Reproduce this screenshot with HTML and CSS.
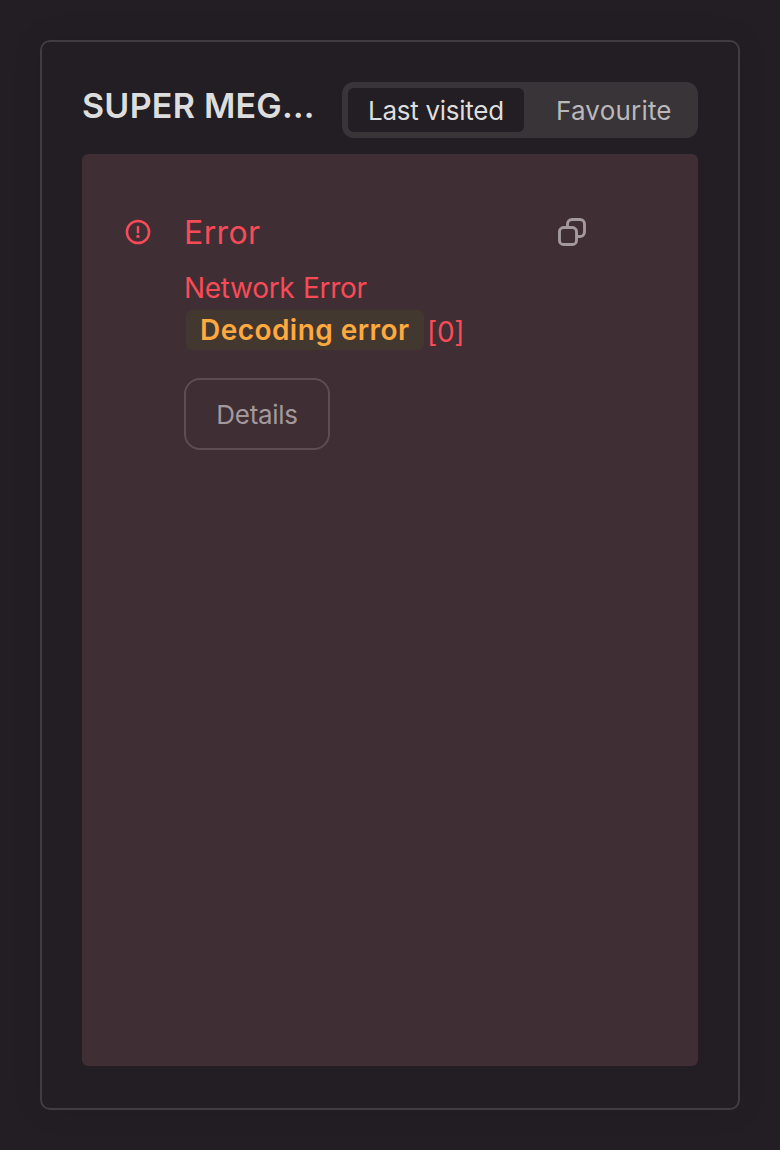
FILE: index.html
```html
<!DOCTYPE html>
<html lang="en">
<head>
<meta charset="utf-8">
<title>Projects</title>
<link rel="stylesheet" href="styles.css">
</head>
<body>
<main class="card">
  <header class="card-header">
    <h1 class="title">SUPER MEG…</h1>
    <div class="tabs">
      <button class="tab tab-active">Last visited</button>
      <button class="tab tab-idle">Favourite</button>
    </div>
  </header>
  <section class="error-panel">
    <svg class="alert-icon" viewBox="0 0 28 28" fill="none" stroke="currentColor" stroke-width="2.5" stroke-linecap="round"><circle cx="14" cy="14" r="11.1"/><path d="M14 9v5.200"/><circle cx="14" cy="18.4" r="1.7" fill="currentColor" stroke="none"/></svg>
    <div class="error-body">
      <div class="error-head">
        <h2 class="error-title">Error</h2>
        <svg class="copy-icon" viewBox="0 0 32 32" fill="none" stroke="currentColor" stroke-width="2.9" stroke-linejoin="round"><rect x="3.5" y="11.5" width="17" height="17" rx="4"/><path d="M11.5 11.5V8a4.5 4.5 0 0 1 4.500-4.500h8a4.500 4.500 0 0 1 4.500 4.500v8a4.500 4.500 0 0 1-4.500 4.500h-3.500"/></svg>
      </div>
      <p class="error-type">Network Error</p>
      <p class="error-message"><mark class="code">Decoding error</mark><span class="code-number">[0]</span></p>
      <button class="details">Details</button>
    </div>
  </section>
</main>
</body>
</html>
```
FILE: styles.css
```css
* { box-sizing: border-box; }
body { margin: 0; padding: 40px; height: 1150px; background: #221e23; font-family: Inter, sans-serif; }
h1, h2, p { margin: 0; font-weight: 400; }
button { font: inherit; margin: 0; }
.card { height: 1070px; padding: 40px; border: 2px solid #403d42; border-radius: 10px; box-shadow: 0 0 32px rgba(0, 0, 0, .08); display: flex; flex-direction: column; gap: 16px; }
.card-header { display: flex; gap: 24px; }
.title { width: 236px; font-size: 34px; line-height: 48px; font-weight: 600; letter-spacing: .25px; color: #dedddd; white-space: nowrap; }
.tabs { width: 356px; height: 56px; padding: 6px; display: flex; gap: 12px; background: #393438; border-radius: 12px; flex: none; }
.tab { border: 0; height: 44px; padding: 2px 20px 0; border-radius: 6px; background: none; color: #bab8ba; font-size: 26px; line-height: 42px; text-align: left; letter-spacing: .2px; white-space: nowrap; flex: 1; }
.tab-active { width: 176px; flex: none; background: #221e23; color: #dedddd; letter-spacing: -.27px; }
.tab-idle { padding-right: 0; }
.error-panel { flex: 1; margin-bottom: 2px; padding: 56px 110px 0 42px; display: flex; align-items: flex-start; gap: 32px; background: #3f2e33; border-radius: 6px; color: #f84b57; }
.alert-icon { width: 28px; height: 28px; margin-top: 8px; flex: none; }
.error-body { flex: 1; }
.error-head { display: flex; justify-content: space-between; align-items: center; height: 44px; }
.error-title { font-size: 32px; letter-spacing: .4px; }
.copy-icon { width: 32px; height: 32px; color: #a3999d; }
.error-type { margin-top: 14px; font-size: 28px; line-height: 40px; letter-spacing: -.3px; word-spacing: 1px; }
.error-message { display: flex; gap: 3px; margin-left: 2px; font-size: 28px; line-height: 44px; height: 44px; }
.code { width: 238px; height: 40px; margin-top: 2px; padding: 0 14px; line-height: 40px; font-weight: 600; letter-spacing: .45px; white-space: nowrap; color: #ffa940; background: #43382f; border-radius: 6px; }
.code-number { padding-top: 2px; letter-spacing: -.3px; }
.details { display: block; margin-top: 26px; width: 146px; height: 72px; border: 2px solid #5d4e53; border-radius: 16px; background: none; color: #a3999d; font-size: 26px; letter-spacing: -.3px; }
```
